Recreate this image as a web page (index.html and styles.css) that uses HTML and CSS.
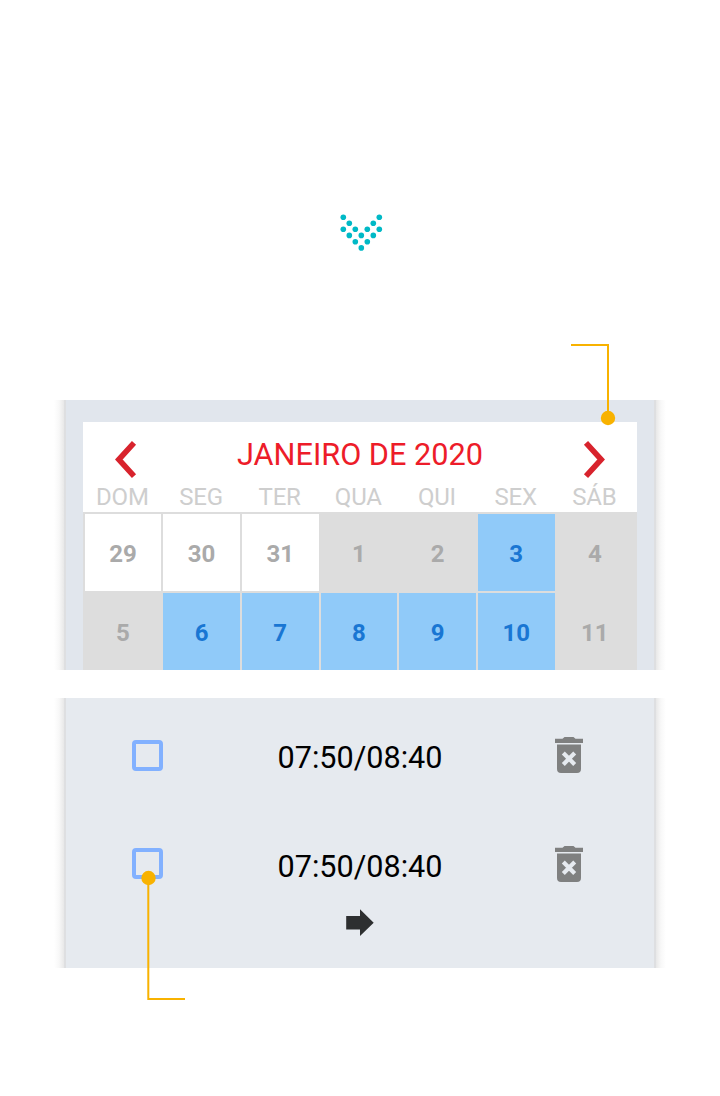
FILE: index.html
```html
<!DOCTYPE html>
<html lang="pt">
<head>
<meta charset="utf-8">
<title>Agenda</title>
<link rel="stylesheet" href="styles.css">
</head>
<body>
<main class="page">
  <svg class="dots" width="43" height="38" viewBox="0 0 43 38" fill="#00b9c6">
    <g transform="translate(.3 0)">
    <circle cx="3" cy="3.3" r="2.8"/><circle cx="39" cy="3.3" r="2.8"/>
    <circle cx="9" cy="9.3" r="2.8"/><circle cx="33" cy="9.3" r="2.8"/>
    <circle cx="3" cy="15.3" r="2.8"/><circle cx="15" cy="15.3" r="2.8"/><circle cx="27" cy="15.3" r="2.8"/><circle cx="39" cy="15.3" r="2.8"/>
    <circle cx="9" cy="21.4" r="2.8"/><circle cx="21" cy="21.4" r="2.8"/><circle cx="33" cy="21.4" r="2.8"/>
    <circle cx="15" cy="27.8" r="2.8"/><circle cx="27" cy="27.8" r="2.8"/>
    <circle cx="21" cy="33.9" r="2.8"/>
    </g>
  </svg>

  <section class="panel panel-calendar">
    <div class="calendar">
      <header class="month">
        <svg class="arrow" width="24" height="40" viewBox="0 0 24 40"><path d="M20 2.8 4.8 19.5 20 36.2" fill="none" stroke="#d8232d" stroke-width="5.6"/></svg>
        <h1 class="month-name">JANEIRO DE 2020</h1>
        <svg class="arrow" width="24" height="40" viewBox="0 0 24 40"><path d="M4 2.8 19.2 19.5 4 36.2" fill="none" stroke="#d8232d" stroke-width="5.6"/></svg>
      </header>
      <div class="weekdays"><span>DOM</span><span>SEG</span><span>TER</span><span>QUA</span><span>QUI</span><span>SEX</span><span>SÁB</span></div>
      <div class="days">
        <span class="day other">29</span><span class="day other">30</span><span class="day other">31</span><span class="day">1</span><span class="day">2</span><span class="day open">3</span><span class="day">4</span>
        <span class="day">5</span><span class="day open">6</span><span class="day open">7</span><span class="day open">8</span><span class="day open">9</span><span class="day open">10</span><span class="day">11</span>
      </div>
    </div>
    <svg class="pointer pointer-top" width="45" height="83" viewBox="0 0 45 83"><path d="M0 2H37V76" fill="none" stroke="#f8b200" stroke-width="2"/><circle cx="37" cy="75" r="7.2" fill="#f8b200"/></svg>
  </section>

  <section class="panel panel-slots">
    <div class="slots">
      <div class="slot">
        <span class="check"></span><span class="time">07:50/08:40</span>
        <svg class="trash" width="28" height="36" viewBox="0 0 28 36"><path d="M0 1.8H7.5L9.5 0H18.5L20.5 1.8H28V6H0ZM2 7.5H26V32Q26 36 22 36H6Q2 36 2 32Z" fill="#7f8080"/><path d="m8.3 16 11.4 11.4m0-11.4-11.4 11.4" stroke="#e6eaef" stroke-width="4.2"/></svg>
      </div>
      <div class="slot">
        <span class="check"></span><span class="time">07:50/08:40</span>
        <svg class="trash" width="28" height="36" viewBox="0 0 28 36"><path d="M0 1.8H7.5L9.5 0H18.5L20.5 1.8H28V6H0ZM2 7.5H26V32Q26 36 22 36H6Q2 36 2 32Z" fill="#7f8080"/><path d="m8.3 16 11.4 11.4m0-11.4-11.4 11.4" stroke="#e6eaef" stroke-width="4.2"/></svg>
      </div>
      <svg class="next" width="28" height="28" viewBox="0 0 28 28"><path d="M.2 7H14V.3L27.7 13.7 14 27V20.5H.2Z" fill="#2d2f30"/></svg>
    </div>
    <svg class="pointer pointer-bottom" width="46" height="132" viewBox="0 0 46 132"><path d="M8.3 8V129H45" fill="none" stroke="#f8b200" stroke-width="2"/><circle cx="8.5" cy="8" r="7.2" fill="#f8b200"/></svg>
  </section>
</main>
</body>
</html>
```
FILE: styles.css
```css
* { box-sizing: border-box; }
body { margin: 0; background: #fff; font-family: Roboto, sans-serif; }
.page { width: 720px; height: 1096px; padding-top: 214px; }
.dots { display: block; margin: 0 0 148px 340px; }
.panel {
  position: relative;
  width: 612px;
  height: 270px;
  margin-left: 54px;
  padding: 0 12px;
  background: linear-gradient(90deg, #fff, #f8f8f8 5px, #e8e8e8 10px, #dedfe1 10px, #dedfe1 12px, transparent 12px, transparent 600px, #dedfe1 600px, #dedfe1 602px, #e8e8e8 602px, #f8f8f8 607px, #fff);
}
.panel-calendar { padding: 21.5px 29px 0; }
.panel-calendar { background-color: #e1e6ed; }
.panel-slots { margin-top: 28px; background-color: #e6eaef; }
.calendar { display: flex; flex-direction: column; height: 248.5px; background: #fff; }
.month { display: flex; justify-content: space-between; height: 60px; padding: 18px 31px 0; }
.month-name { margin: -3px 0 0; color: #ed1c29; font-size: 30.7px; line-height: 36px; font-weight: 400; white-space: nowrap; }
.weekdays { display: grid; grid-template-columns: repeat(7, 78.67px); height: 30.5px; color: #cecece; font-size: 24px; line-height: 31px; letter-spacing: -.2px; text-align: center; }
.days { display: grid; grid-template-columns: repeat(7, 76.67px); grid-template-rows: 77px 77px; gap: 2px; padding: 2px 0 0 1.6px; overflow: hidden; background: #ddd; }
.day { color: #aaa; background: #ddd; font-size: 24px; font-weight: 700; line-height: 80px; text-align: center; }
.day.other { background: #fff; }
.day.open { color: #1976d3; background: #90caf9; }
.slots { display: flex; flex-direction: column; height: 270px; padding-top: 38px; }
.slot { display: flex; justify-content: space-between; height: 108.5px; padding: 0 71px 0 66px; }
.check { width: 31px; height: 31px; margin-top: 3.5px; border: 4px solid #82b1ff; border-radius: 4px; }
.time { padding: 1px 0 0 2px; color: #000; font-size: 30.6px; line-height: 42px; }
.trash { margin-top: 1px; }
.next { flex: none; margin: -44px 0 0 280px; }
.pointer { position: absolute; }
.pointer-top { left: 517px; top: -57px; }
.pointer-bottom { left: 86px; top: 172px; }
```
